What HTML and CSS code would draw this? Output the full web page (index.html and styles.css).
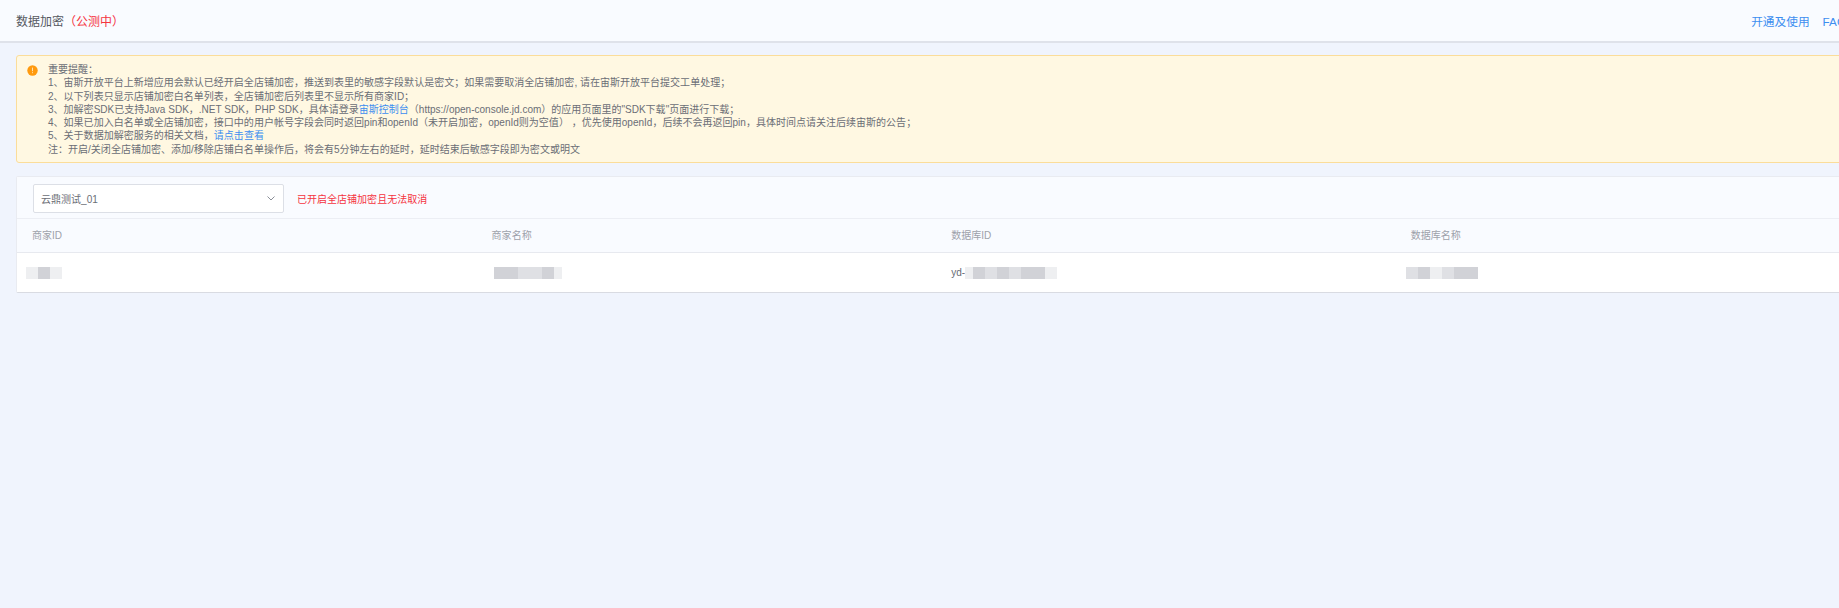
FILE: index.html
```html
<!DOCTYPE html>
<html lang="zh-CN">
<head>
    <meta charset="UTF-8">
    <title>数据加密</title>
    <link rel="stylesheet" href="styles.css">
</head>
<body>
<div class="page">
    <div class="topbar">
        <div class="title">数据加密<span class="beta">（公测中）</span></div>
        <div class="links">
            <a href="#">开通及使用</a>
            <a href="#">FAQ</a>
        </div>
    </div>

    <div class="content">
        <div class="notice">
            <svg class="notice-icon" viewBox="0 0 11 11" width="11" height="11">
                <circle cx="5.5" cy="5.5" r="5.2" fill="#ff9a0e"/>
                <rect x="5" y="2.6" width="1" height="3.6" fill="#ffe2b0"/>
                <rect x="5" y="7.2" width="1" height="1" fill="#ffe2b0"/>
            </svg>
            <div class="notice-text">
                <div>重要提醒：</div>
                <div>1、宙斯开放平台上新增应用会默认已经开启全店铺加密，推送到表里的敏感字段默认是密文；如果需要取消全店铺加密, 请在宙斯开放平台提交工单处理；</div>
                <div>2、以下列表只显示店铺加密白名单列表，全店铺加密后列表里不显示所有商家ID；</div>
                <div>3、加解密SDK已支持Java SDK，.NET SDK，PHP SDK，具体请登录<a href="#">宙斯控制台</a>（https://open-console.jd.com）的应用页面里的"SDK下载"页面进行下载；</div>
                <div>4、如果已加入白名单或全店铺加密，接口中的用户帐号字段会同时返回pin和openId（未开启加密，openId则为空值） ，优先使用openId，后续不会再返回pin，具体时间点请关注后续宙斯的公告；</div>
                <div>5、关于数据加解密服务的相关文档，<a href="#">请点击查看</a></div>
                <div>注：开启/关闭全店铺加密、添加/移除店铺白名单操作后，将会有5分钟左右的延时，延时结束后敏感字段即为密文或明文</div>
            </div>
        </div>

        <div class="card">
            <div class="toolbar">
                <div class="select">
                    <span>云鼎测试_01</span>
                    <svg viewBox="0 0 8 5" width="8" height="5"><path d="M.5.5L4 4 7.5.5" fill="none" stroke="#8b8f98" stroke-width="1"/></svg>
                </div>
                <span class="warn">已开启全店铺加密且无法取消</span>
            </div>
            <div class="row head">
                <div>商家ID</div>
                <div>商家名称</div>
                <div>数据库ID</div>
                <div>数据库名称</div>
            </div>
            <div class="row body">
                <div>
                    <div class="mosaic shift-a">
                        <i class="m1"></i><i class="m3"></i><i class="m1"></i>
                    </div>
                </div>
                <div>
                    <div class="mosaic shift-b">
                        <i class="m3"></i><i class="m3"></i><i class="m2"></i><i class="m2"></i><i class="m3"></i><i class="m1 half"></i>
                    </div>
                </div>
                <div class="with-prefix">
                    yd-
                    <div class="mosaic">
                        <i class="m1 half"></i><i class="m3"></i><i class="m2"></i><i class="m3"></i><i class="m2"></i><i class="m3"></i><i class="m3"></i><i class="m1"></i>
                    </div>
                </div>
                <div>
                    <div class="mosaic shift-c">
                        <i class="m2"></i><i class="m3"></i><i class="m1"></i><i class="m2"></i><i class="m3"></i><i class="m3"></i>
                    </div>
                </div>
            </div>
        </div>
    </div>
</div>
</body>
</html>
```

FILE: styles.css
```css
html, body { margin: 0; height: 100%; overflow: hidden; background: #f0f4fd; }
body { font-family: "Liberation Sans", "Noto Sans CJK SC", sans-serif; font-size: 10.03px; color: #6b6e76; }
a { color: #3d8ef0; text-decoration: none; }

.page { width: 1868px; }

.topbar { display: flex; justify-content: space-between; align-items: center; height: 41px; padding: 0 22px 0 16px; background: #f9fbff; border-bottom: 2px solid #dfe2ea; }
.title { font-size: 12px; color: #55585f; }
.beta { color: #f5343f; }
.links { display: flex; align-items: baseline; gap: 13px; font-size: 11.7px; }

.content { padding: 12px 0 0 16px; }

.notice { display: flex; gap: 10px; padding: 7px 12px 6px 10px; background: #fff8e2; border: 1px solid #fbdd9a; border-radius: 3px; line-height: 13.3px; }
.notice-icon { flex: none; margin-top: 2px; }

.card { margin-top: 13px; background: #fff; border: 1px solid #e9ebf1; border-bottom: 1px solid #d9dbe2; border-radius: 2px; }
.toolbar { display: flex; align-items: center; gap: 13px; box-sizing: border-box; height: 42px; padding: 1px 0 0 16px; background: #f9fbff; border-bottom: 1px solid #eceef4; }
.select { display: flex; align-items: center; justify-content: space-between; box-sizing: border-box; width: 251px; height: 29px; padding: 0 8px 0 7px; background: #fff; border: 1px solid #dcdfe6; border-radius: 2px; }
.warn { color: #f5343f; }

.row { display: grid; grid-template-columns: repeat(4, 459.6px); padding-left: 15px; }
.head { box-sizing: border-box; height: 34px; padding-bottom: 2px; align-items: center; background: #f9fbff; border-bottom: 1px solid #e7e9ef; color: #9da1aa; }
.body { height: 39px; align-items: center; background: #fff; color: #666a73; }

.with-prefix { display: flex; align-items: center; }
.mosaic { display: flex; height: 12px; }
.mosaic i { display: block; width: 12px; height: 100%; }
.mosaic .half { width: 8px; }
.m1 { background: #eeeff1; }
.m2 { background: #dfe0e4; }
.m3 { background: #d1d2d7; }
.shift-a { margin-left: -6px; }
.shift-b { margin-left: 2px; }
.shift-c { margin-left: -5px; }
```
